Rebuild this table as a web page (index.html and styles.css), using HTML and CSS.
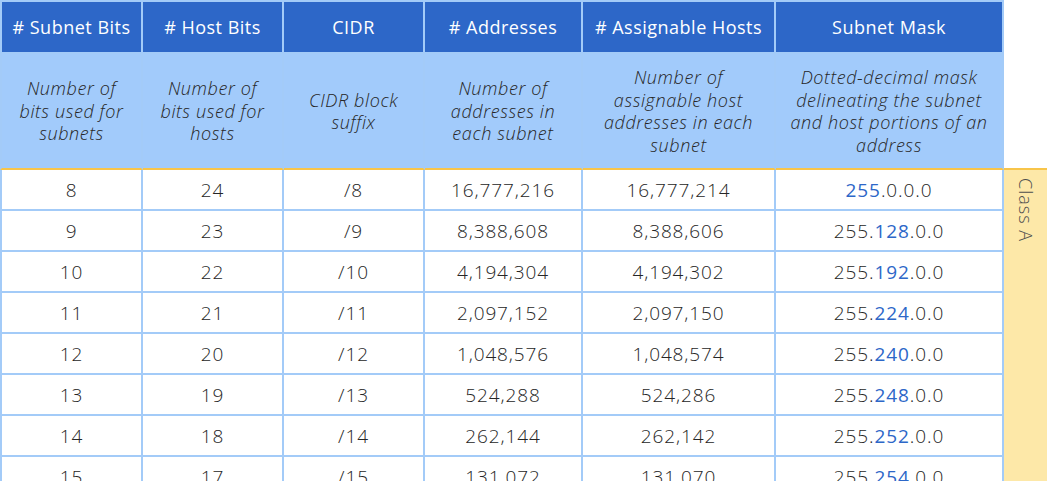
FILE: index.html
```html
<!DOCTYPE html>
<html lang="en">
<head>
<meta charset="utf-8">
<title>Subnet table</title>
<link rel="stylesheet" href="styles.css">
</head>
<body>
<div class="sheet">
  <div class="c h1 first"># Subnet Bits</div>
  <div class="c h1"># Host Bits</div>
  <div class="c h1">CIDR</div>
  <div class="c h1"># Addresses</div>
  <div class="c h1"># Assignable Hosts</div>
  <div class="c h1">Subnet Mask</div>
  <div class="c hx"></div>

  <div class="c h2 first">Number of bits used for subnets</div>
  <div class="c h2">Number of bits used for hosts</div>
  <div class="c h2">CIDR block suffix</div>
  <div class="c h2">Number of addresses in each subnet</div>
  <div class="c h2">Number of assignable host addresses in each subnet</div>
  <div class="c h2">Dotted-decimal mask delineating the subnet and host portions of an address</div>
  <div class="c hx2"></div>

  <div class="c b first">8</div><div class="c b">24</div><div class="c b">/8</div><div class="c b">16,777,216</div><div class="c b">16,777,214</div><div class="c b"><span class="hl">255</span>.0.0.0</div>
  <div class="cls cls-a"><span class="cls-label">Class A</span></div>
  <div class="c b first">9</div><div class="c b">23</div><div class="c b">/9</div><div class="c b">8,388,608</div><div class="c b">8,388,606</div><div class="c b">255.<span class="hl">128</span>.0.0</div>
  <div class="c b first">10</div><div class="c b">22</div><div class="c b">/10</div><div class="c b">4,194,304</div><div class="c b">4,194,302</div><div class="c b">255.<span class="hl">192</span>.0.0</div>
  <div class="c b first">11</div><div class="c b">21</div><div class="c b">/11</div><div class="c b">2,097,152</div><div class="c b">2,097,150</div><div class="c b">255.<span class="hl">224</span>.0.0</div>
  <div class="c b first">12</div><div class="c b">20</div><div class="c b">/12</div><div class="c b">1,048,576</div><div class="c b">1,048,574</div><div class="c b">255.<span class="hl">240</span>.0.0</div>
  <div class="c b first">13</div><div class="c b">19</div><div class="c b">/13</div><div class="c b">524,288</div><div class="c b">524,286</div><div class="c b">255.<span class="hl">248</span>.0.0</div>
  <div class="c b first">14</div><div class="c b">18</div><div class="c b">/14</div><div class="c b">262,144</div><div class="c b">262,142</div><div class="c b">255.<span class="hl">252</span>.0.0</div>
  <div class="c b first">15</div><div class="c b">17</div><div class="c b">/15</div><div class="c b">131,072</div><div class="c b">131,070</div><div class="c b">255.<span class="hl">254</span>.0.0</div>
</div>
</body>
</html>
```

FILE: styles.css
```css
html, body {
  margin: 0;
  padding: 0;
  overflow: hidden;
  background: #ffffff;
}

body {
  font-family: "Open Sans", "Noto Sans", sans-serif;
  color: #333333;
}

.sheet {
  display: grid;
  grid-template-columns: 143px 141px 141px 158px 193px 228px 43px;
  grid-template-rows: 54px 116px repeat(8, 41px);
  width: 1047px;
}

.c {
  box-sizing: border-box;
  display: flex;
  align-items: center;
  justify-content: center;
  text-align: center;
  border-right: 2px solid #a3cbf8;
  border-bottom: 2px solid #a3cbf8;
}

.first {
  border-left: 2px solid #a3cbf8;
}

.h1 {
  background: #2d67c8;
  color: #ffffff;
  font-size: 18px;
  letter-spacing: 0.5px;
  border-top: 2px solid #a3cbf8;
  padding: 0 4px;
  white-space: nowrap;
}

.h2 {
  background: #a2cbfb;
  border-bottom: 2px solid #f8c54a;
  font-style: italic;
  font-weight: 300;
  font-size: 18px;
  letter-spacing: 0.6px;
  line-height: 22.5px;
  padding: 0 10px;
  color: #262626;
}

.hx {
  border: none;
}

.hx2 {
  border-right: none;
  border-bottom: 2px solid #f8c54a;
}

.b {
  font-size: 19px;
  font-weight: 300;
  letter-spacing: 0.9px;
  color: #262626;
}

.hl {
  color: #2d67c8;
  font-weight: 500;
}

.cls {
  grid-column: 7;
  grid-row: 3 / span 8;
  background: #fde8a8;
  display: flex;
  justify-content: center;
  padding-top: 8px;
  box-sizing: border-box;
}

.cls-label {
  writing-mode: vertical-rl;
  font-size: 18px;
  font-weight: 300;
  color: #4e4e4e;
  letter-spacing: 1px;
}
```
